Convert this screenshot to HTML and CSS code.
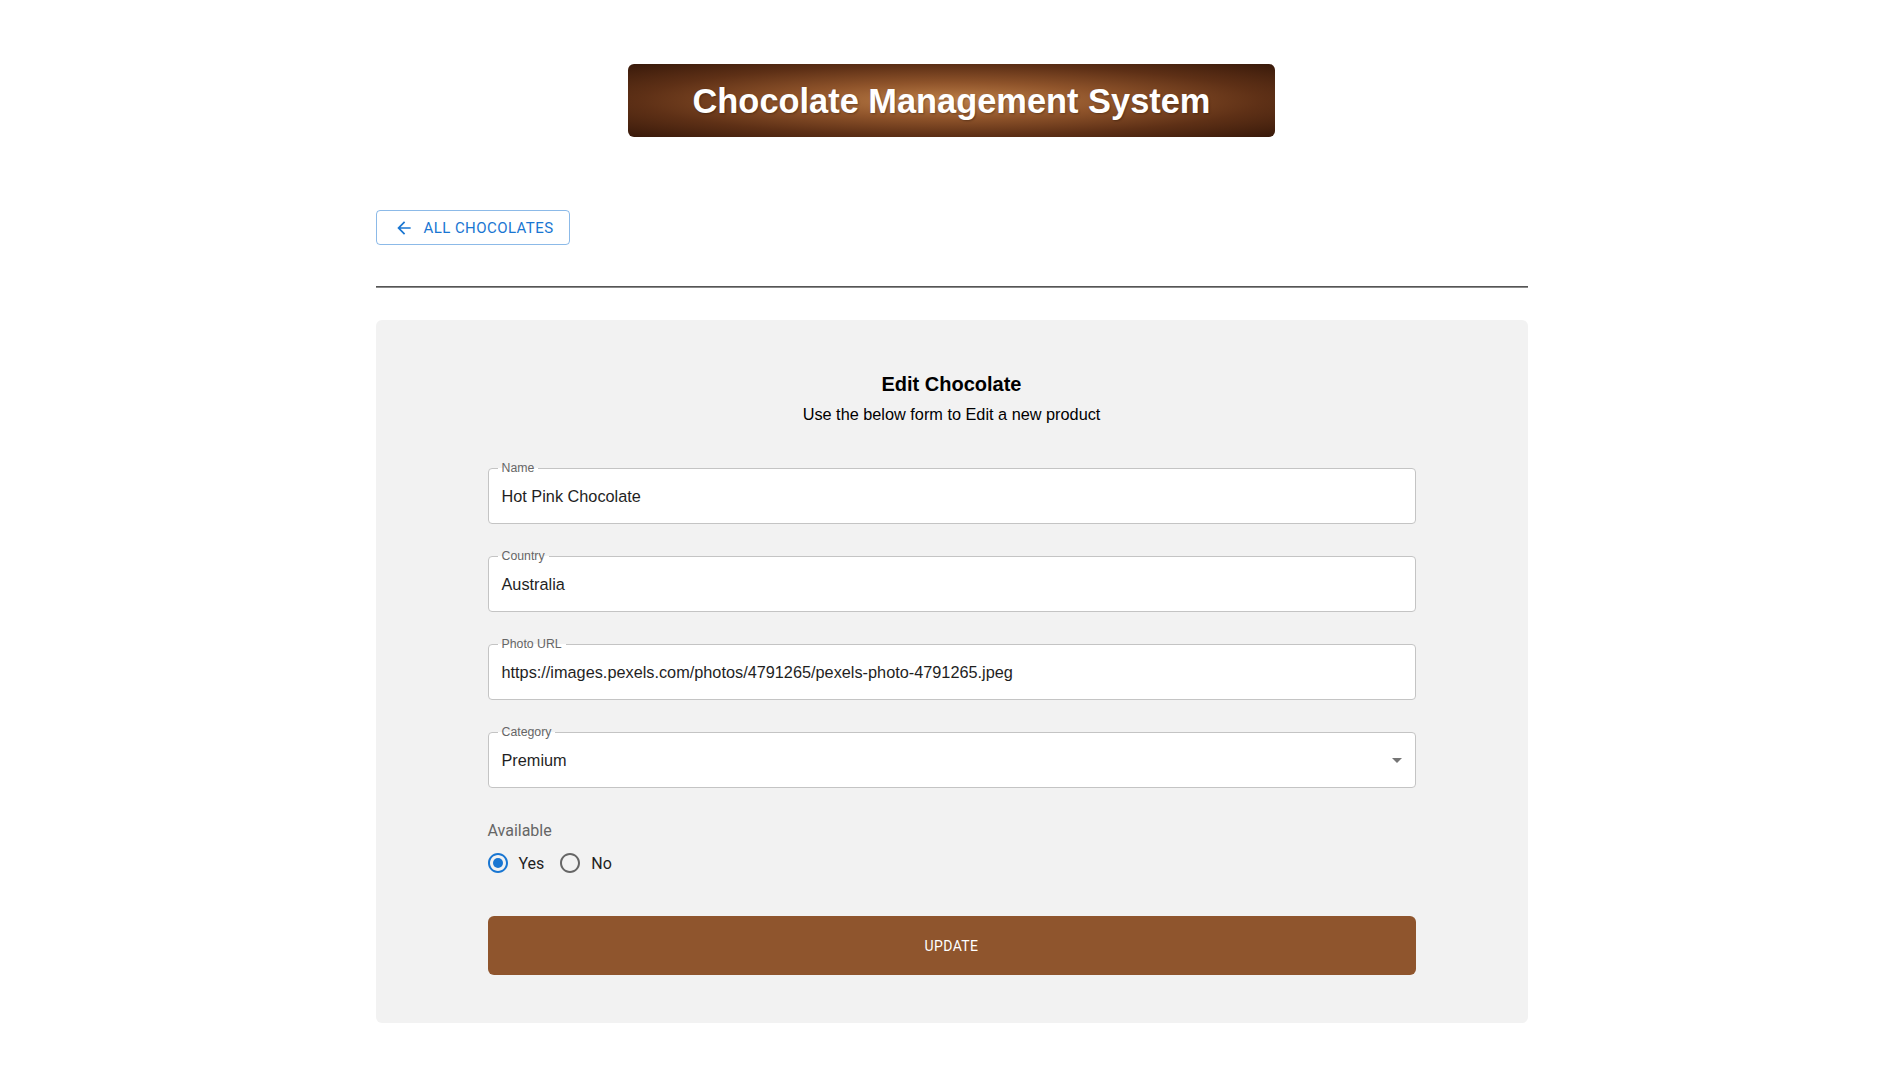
FILE: index.html
```html
<!DOCTYPE html>
<html lang="en">
<head>
<meta charset="utf-8">
<title>Chocolate Management System</title>
<link rel="stylesheet" href="styles.css">
</head>
<body>
<div class="page">
  <header class="banner-wrap">
    <h1 class="banner">Chocolate Management System</h1>
  </header>
  <main class="container">
    <a class="back-btn" href="#">
      <svg class="back-icon" viewBox="0 0 24 24" width="20" height="20"><path d="M20 11H7.83l5.59-5.59L12 4l-8 8 8 8 1.41-1.41L7.83 13H20v-2z"/></svg>
      <span>All Chocolates</span>
    </a>
    <hr class="divider">
    <section class="card">
      <h2 class="card-title">Edit Chocolate</h2>
      <p class="card-sub">Use the below form to Edit a new product</p>
      <form class="form">
        <div class="fields">
          <div class="field">
            <span class="field-label">Name</span>
            <span class="field-value">Hot Pink Chocolate</span>
          </div>
          <div class="field">
            <span class="field-label">Country</span>
            <span class="field-value">Australia</span>
          </div>
          <div class="field">
            <span class="field-label">Photo URL</span>
            <span class="field-value">https://images.pexels.com/photos/4791265/pexels-photo-4791265.jpeg</span>
          </div>
          <div class="field field-select">
            <span class="field-label">Category</span>
            <span class="field-value">Premium</span>
            <svg class="select-arrow" viewBox="0 0 24 24" width="24" height="24"><path d="M7 10l5 5 5-5z"/></svg>
          </div>
        </div>
        <div class="avail-label">Available</div>
        <div class="radio-row">
          <label class="radio-opt">
            <span class="radio radio-on">
              <svg viewBox="0 0 24 24" width="24" height="24"><path d="M12 2C6.48 2 2 6.48 2 12s4.48 10 10 10 10-4.48 10-10S17.52 2 12 2zm0 18c-4.42 0-8-3.58-8-8s3.58-8 8-8 8 3.58 8 8-3.58 8-8 8z"/><circle cx="12" cy="12" r="5"/></svg>
            </span>
            <span class="radio-text">Yes</span>
          </label>
          <label class="radio-opt">
            <span class="radio radio-off">
              <svg viewBox="0 0 24 24" width="24" height="24"><path d="M12 2C6.48 2 2 6.48 2 12s4.48 10 10 10 10-4.48 10-10S17.52 2 12 2zm0 18c-4.42 0-8-3.58-8-8s3.58-8 8-8 8 3.58 8 8-3.58 8-8 8z"/></svg>
            </span>
            <span class="radio-text">No</span>
          </label>
        </div>
        <button type="button" class="update-btn">Update</button>
      </form>
    </section>
  </main>
</div>
</body>
</html>
```

FILE: styles.css
```css
* { box-sizing: border-box; }

html, body {
  margin: 0;
  padding: 0;
  background: #ffffff;
  font-family: "Liberation Sans", Arial, sans-serif;
  color: #000;
}

.page {
  padding-top: 64px;
  padding-bottom: 65px;
}

.banner-wrap {
  display: flex;
  justify-content: center;
}

.banner {
  margin: 0;
  padding: 17px 0 15px;
  width: 647px;
  height: 73px;
  line-height: 41px;
  text-align: center;
  font-size: 34.4px;
  font-weight: 700;
  letter-spacing: 0;
  color: #ffffff;
  border-radius: 6px;
  text-shadow: 1px 1px 2px rgba(0, 0, 0, 0.3);
  background: radial-gradient(ellipse at center, #bd7f48 0%, #8e532a 35%, #5e3016 68%, #38190a 100%);
}

.container {
  width: 1152px;
  margin: 0 auto;
  padding-top: 73px;
}

.back-btn {
  display: inline-flex;
  align-items: center;
  height: 35px;
  padding: 0 15px 0 17px;
  border: 1px solid rgba(25, 118, 210, 0.5);
  border-radius: 4px;
  color: #1976d2;
  text-decoration: none;
  font-family: Roboto, "Liberation Sans", sans-serif;
  font-weight: 400;
  font-size: 15px;
  letter-spacing: 0.43px;
  text-transform: uppercase;
}

.back-icon {
  fill: #1976d2;
  margin-right: 10px;
  flex: none;
}

.divider {
  margin: 41px 0 0;
  height: 2px;
  border: 0;
  border-top: 1px solid #555555;
  border-bottom: 1px solid #8a8a8a;
}

.card {
  margin-top: 32px;
  background: #f2f2f2;
  border-radius: 6px;
  padding: 48px 0 48px;
}

.card-title {
  margin: 0 0 2px;
  text-align: center;
  font-size: 20px;
  font-weight: 700;
  line-height: 32px;
}

.card-sub {
  margin: 0;
  text-align: center;
  font-size: 16.3px;
  line-height: 24px;
}

.form {
  width: 928px;
  margin: 42px auto 0;
}

.fields {
  display: flex;
  flex-direction: column;
  gap: 32px;
}

.field {
  position: relative;
  height: 56px;
  background: #ffffff;
  border: 1px solid #c4c4c4;
  border-radius: 4px;
  display: flex;
  align-items: center;
  padding: 0 13px;
}

.field-label {
  position: absolute;
  top: -8px;
  left: 9px;
  padding: 0 4px;
  font-size: 12.3px;
  line-height: 14px;
  color: #666666;
  background: linear-gradient(to bottom, #f2f2f2 0, #f2f2f2 7px, #ffffff 7px, #ffffff 100%);
}

.field-value {
  font-size: 16.3px;
  line-height: 23px;
  color: #1f1f1f;
}

.select-arrow {
  position: absolute;
  right: 6px;
  top: 15px;
  fill: rgba(0, 0, 0, 0.54);
}

.avail-label {
  margin-top: 31px;
  font-family: Roboto, "Liberation Sans", sans-serif;
  font-size: 16px;
  line-height: 24px;
  color: #666666;
}

.radio-row {
  display: flex;
  align-items: center;
  height: 42px;
  margin-top: -1px;
}

.radio-opt {
  display: flex;
  align-items: center;
  margin-left: -11px;
  margin-right: 16px;
  font-family: Roboto, "Liberation Sans", sans-serif;
  font-size: 16px;
  color: #1f1f1f;
}

.radio {
  display: flex;
  padding: 9px;
}

.radio-on svg { fill: #1976d2; }
.radio-off svg { fill: #666666; }

.update-btn {
  display: block;
  width: 100%;
  height: 59px;
  margin-top: 32px;
  border: 0;
  border-radius: 6px;
  background: #8f552d;
  color: #ffffff;
  font-family: Roboto, "Liberation Sans", sans-serif;
  font-size: 14px;
  font-weight: 400;
  letter-spacing: 0.4px;
  text-transform: uppercase;
}
```
